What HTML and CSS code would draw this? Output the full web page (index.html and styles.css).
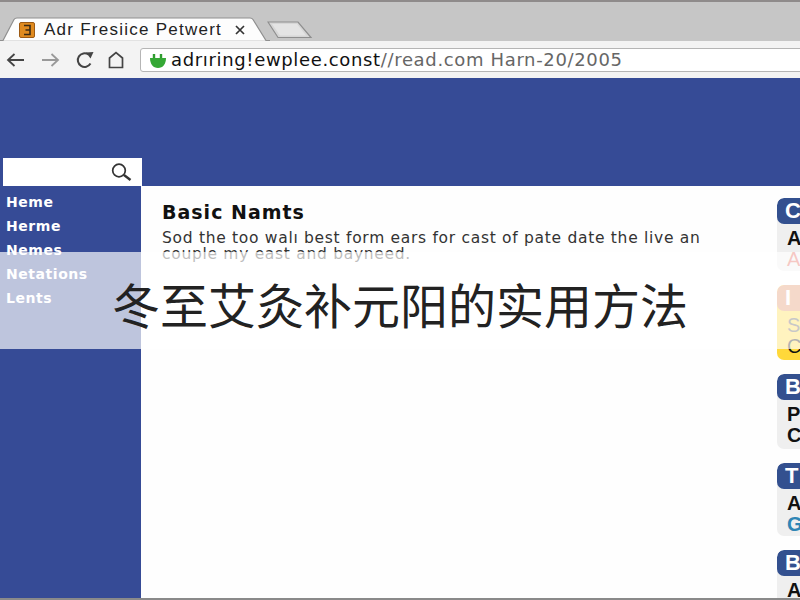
FILE: index.html
```html
<!DOCTYPE html>
<html lang="zh">
<head>
<meta charset="utf-8">
<title>冬至艾灸补元阳的实用方法</title>
<link rel="stylesheet" href="styles.css">
</head>
<body>
<div class="page">
  <header class="chrome">
    <div class="tabstrip">
      <div class="tab">
        <svg class="tab-shape" width="270" height="24" viewBox="0 0 270 24"><path d="M0 23.5H3L14 2.5Q15 1 17 1H250Q252 1 253 2.5L266 23.5H270" fill="#fdfdfd" stroke="#8f8f8f" stroke-width="1.2"/></svg>
        <svg class="favicon" width="16" height="16" viewBox="0 0 16 16"><rect x=".5" y=".5" width="15" height="15" rx="1.5" fill="#e08a1e" stroke="#9c5a14"/><path d="M5 3.5H11V12.5H5M6.5 8H10.5" fill="none" stroke="#3b2a14" stroke-width="1.6"/></svg>
        <span class="tab-title">Adr Fresiice Petwert</span>
        <svg class="tab-close" width="12" height="12" viewBox="0 0 12 12"><path d="M2 2L10 10M10 2L2 10" stroke="#333" stroke-width="1.7"/></svg>
      </div>
      <svg class="newtab" width="46" height="18" viewBox="0 0 46 18"><path d="M1 1H31L44 16.500H11Z" fill="#d6d6d6" stroke="#8e8e8e" stroke-width="1.200"/><path d="M5 3H30L39 14.500H13Z" fill="#e4e4e4"/></svg>
    </div>
    <div class="toolbar">
      <svg class="tool back" width="20" height="16" viewBox="0 0 20 16"><path d="M18 8H2M8.500 2L2 8L8.500 14" fill="none" stroke="#444" stroke-width="1.800"/></svg>
      <svg class="tool fwd" width="20" height="16" viewBox="0 0 20 16"><path d="M2 8H18M11.500 2L18 8L11.500 14" fill="none" stroke="#999" stroke-width="1.800"/></svg>
      <svg class="tool reload" width="20" height="18" viewBox="0 0 20 18"><path d="M15.500 12.500A6.800 6.800 0 1 1 13.500 3.500" fill="none" stroke="#444" stroke-width="2"/><path d="M11 1.500L18.500 1L15.500 7.500Z" fill="#444"/></svg>
      <svg class="tool home" width="16" height="18" viewBox="0 0 16 18"><path d="M1.500 16.500V7L8 1.500L14.500 7V16.500Z" fill="none" stroke="#444" stroke-width="1.700"/></svg>
      <div class="urlbar">
        <svg class="lock" width="18" height="18" viewBox="0 0 18 18"><path d="M5 8V3M12 8V3" stroke="#2f9c2f" stroke-width="2.400"/><path d="M1 7H17C17 13 14 17 9 17S1 13 1 7Z" fill="#35a835"/></svg>
        <span class="url"><span class="url-host">adrıring!ewplee.const</span><span class="url-path">//read.com Harn-20/2005</span></span>
      </div>
    </div>
  </header>
  <div class="banner">
    <div class="search">
      <svg width="24" height="20" viewBox="0 0 24 20"><circle cx="10" cy="8.500" r="6.300" fill="none" stroke="#333" stroke-width="1.700"/><path d="M15 13L21.500 18" stroke="#333" stroke-width="2.400"/></svg>
    </div>
  </div>
  <div class="content">
    <nav class="side">
      <a>Heme</a>
      <a>Herme</a>
      <a>Nemes</a>
      <a>Netations</a>
      <a>Lents</a>
    </nav>
    <main class="main">
      <article class="article">
        <h1>Basic Namts</h1>
        <p>Sod the too walı best form ears for cast of pate date the live an couple my east and bayneed.</p>
      </article>
      <aside class="cards">
        <section class="card short">
          <h2>C</h2>
          <div class="card-body"><div>A</div><div class="red">A</div></div>
        </section>
        <section class="card warn">
          <h2>I</h2>
          <div class="card-body"><div class="muted">S</div><div>C</div></div>
        </section>
        <section class="card">
          <h2>B</h2>
          <div class="card-body"><div>P</div><div>C</div></div>
        </section>
        <section class="card short">
          <h2>T</h2>
          <div class="card-body"><div>A</div><div class="blue">G</div></div>
        </section>
        <section class="card">
          <h2>B</h2>
          <div class="card-body"><div>A</div></div>
        </section>
      </aside>
    </main>
  </div>
  <div class="overlay"><span>冬至艾灸补元阳的实用方法</span></div>
</div>
</body>
</html>
```
FILE: styles.css
```css
* { box-sizing: border-box; }
html, body { margin: 0; padding: 0; }
body { font-family: "Liberation Sans", Arial, sans-serif; background: #fff; }
.page {
  position: relative;
  width: 800px;
  height: 600px;
  overflow: hidden;
  display: flex;
  flex-direction: column;
  border-bottom: 2px solid #8a8a8a;
}
.chrome { flex: none; height: 78px; display: flex; flex-direction: column; background: #c6c6c6; border-top: 2px solid #8f8b8b; }
.tabstrip { flex: none; height: 39px; padding-top: 15px; display: flex; align-items: flex-end; position: relative; }
.tab { position: relative; width: 267px; height: 24px; padding-left: 19px; display: flex; align-items: center; flex: none; }
.tab-shape { position: absolute; left: 0; top: 0; }
.favicon { position: relative; flex: none; margin-top: 2px; }
.tab-title { position: relative; margin-left: 9px; width: 179px; font-size: 17px; letter-spacing: 1.250px; color: #222; white-space: nowrap; margin-top: 2px; }
.tab-close { position: relative; margin-left: 11px; margin-top: 2px; }
.newtab { flex: none; margin: 0 0 2px 0; }
.toolbar { flex: 1; display: flex; align-items: center; padding: 0 0 0 6px; background: #f3f3f3; }
.tool { flex: none; }
.fwd { margin-left: 14px; }
.reload { margin-left: 15px; }
.home { margin-left: 13px; }
.urlbar {
  flex: 1;
  height: 24px;
  margin: 0 -4px 0 16px;
  padding-left: 8px;
  display: flex;
  align-items: center;
  background: #fff;
  border: 1.5px solid #b5b5b5;
  border-radius: 3px;
}
.lock { flex: none; }
.url { margin-left: 4px; font-family: "DejaVu Sans", sans-serif; font-size: 18px; letter-spacing: .65px; white-space: nowrap; }
.url-host { color: #111; }
.url-path { color: #666; }
.banner { flex: none; height: 108px; background: #364b96; display: flex; align-items: flex-end; padding-left: 3px; }
.search { width: 139px; height: 28px; background: #fff; display: flex; align-items: center; justify-content: flex-end; padding-right: 9px; }
.content { flex: 1; min-height: 0; display: flex; }
.side { flex: none; width: 141px; background: #364b96; padding: 4px 0 0 6px; display: flex; flex-direction: column; font-family: "DejaVu Sans", sans-serif; }
.side a { height: 24px; line-height: 24px; font-size: 14px; font-weight: 700; letter-spacing: .55px; color: #fff; }
.main { flex: 1; min-width: 0; display: flex; background: #fefefe; overflow: hidden; }
.article { flex: none; width: 636px; padding: 15px 0 0 21px; font-family: "DejaVu Sans", sans-serif; }
.article h1 { margin: 0; font-size: 19px; line-height: 22px; letter-spacing: 1px; color: #111; }
.article p { margin: 7px 0 0; width: 548px; font-size: 15.500px; letter-spacing: .7px; line-height: 16px; color: #333; }
.cards { flex: none; width: 60px; padding-top: 12px; display: flex; flex-direction: column; gap: 14px; }
.card { border-radius: 7px 0 0 7px; background: #efefef; overflow: hidden; height: 75px; flex: none; }
.card.short { height: 73px; }
.card h2 { margin: 0; height: 26px; padding-left: 8px; background: #33508f; border-radius: 7px 0 0 7px; color: #fff; font-size: 22px; line-height: 26px; }
.card-body { padding: 4px 0 0 10px; font-size: 20px; font-weight: 700; line-height: 21px; color: #111; }
.red { color: #e2564a; font-weight: 400; }
.blue { color: #2f86b5; }
.muted { color: #555; font-weight: 400; }
.warn { background: #ffd83a; }
.warn h2 { background: #e08a5c; }
.warn .card-body { font-weight: 400; }
.overlay {
  position: absolute;
  left: 0;
  right: 0;
  top: 252px;
  height: 97px;
  padding-top: 5px;
  background: rgba(255, 255, 255, .68);
  display: flex;
  align-items: center;
  justify-content: center;
  font-family: "Noto Sans CJK SC", sans-serif;
  font-size: 48px;
  color: #222;
}
```
